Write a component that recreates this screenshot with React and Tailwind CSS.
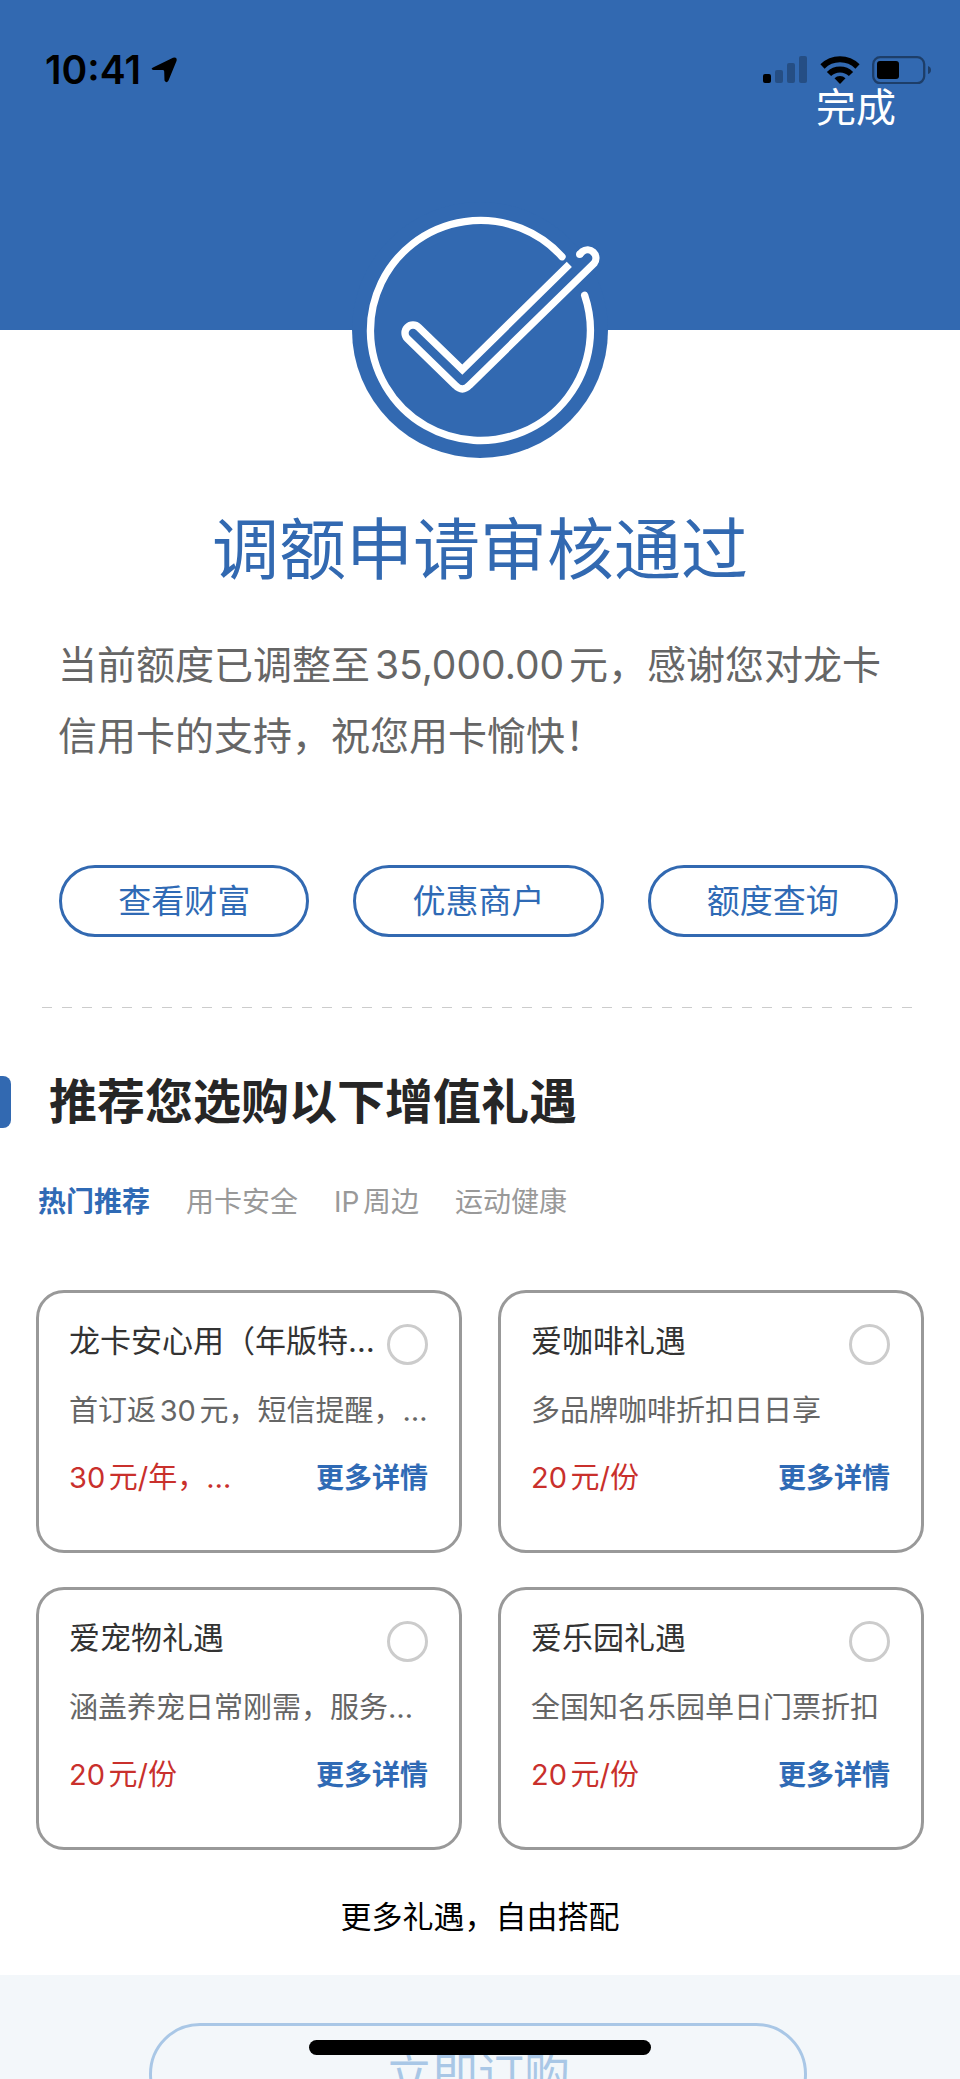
import React, { useState } from "react";

const tabs = ["热门推荐", "用卡安全", "IP周边", "运动健康"];

const actions = ["查看财富", "优惠商户", "额度查询"];

const gifts = [
  {
    id: 1,
    name: "龙卡安心用（年版特…",
    desc: "首订返30元，短信提醒，…",
    price: "30元/年，…",
  },
  { id: 2, name: "爱咖啡礼遇", desc: "多品牌咖啡折扣日日享", price: "20元/份" },
  { id: 3, name: "爱宠物礼遇", desc: "涵盖养宠日常刚需，服务…", price: "20元/份" },
  { id: 4, name: "爱乐园礼遇", desc: "全国知名乐园单日门票折扣", price: "20元/份" },
];

function StatusBar() {
  return (
    <div className="flex items-center justify-between pl-[45px] pr-7 pt-[46px] text-black">
      <div className="flex items-center gap-[10px]">
        <span className="text-[39px] leading-12 font-semibold">10:41</span>
        <svg className="w-[26px] h-[26px]" viewBox="0 0 26 26">
          <path
            d="M2 10.500 22 0.800Q26.500 -0.500 25.500 4L17.500 23.500Q15.500 27 13.500 23.500L13.200 14.500Q13.200 13 12 13L2.500 13Q-1 12 2 10.500Z"
            fill="currentColor"
          />
        </svg>
      </div>
      <div className="flex items-center gap-3">
        <svg className="w-[45px] h-7" viewBox="0 0 45 28">
          <rect x="0" y="18" width="8" height="9" rx="2" />
          <g opacity="0.25">
            <rect x="12" y="14" width="8" height="13" rx="2" />
            <rect x="24" y="7" width="8" height="20" rx="2" />
            <rect x="36" y="0" width="8" height="27" rx="2" />
          </g>
        </svg>
        <svg className="w-10 h-7" viewBox="0 0 40 28">
          <g fill="none" stroke="currentColor" strokeWidth="6">
            <path d="M2.500 10.500A25 25 0 0 1 37.500 10.500" />
            <path d="M9 18A15.500 15.500 0 0 1 31 18" />
          </g>
          <path d="M20 28 14.500 22.300A8 8 0 0 1 25.500 22.300Z" />
        </svg>
        <svg className="w-[60px] h-7" viewBox="0 0 60 28">
          <g opacity="0.4">
            <rect
              x="1.200"
              y="1.200"
              width="51"
              height="26"
              rx="7"
              fill="none"
              stroke="currentColor"
              strokeWidth="2.300"
            />
            <path d="M56 10Q59 11 59 14T56 18Z" />
          </g>
          <rect x="5" y="5" width="22" height="18" rx="3" />
        </svg>
      </div>
    </div>
  );
}

function SuccessIcon() {
  return (
    <svg className="relative w-64 h-64 -mt-32 mx-auto" viewBox="66 6 768 768">
      <circle cx="450" cy="390" r="384" fill="#3269b1" />
      <g fill="none" stroke="#fff" strokeWidth="22">
        <path
          d="M764 286A330 330 0 1 1 696 170"
          strokeLinecap="round"
        />
        <path d="M749 163 757 155A25 25 0 0 1 793 189L418 556Q397 578 376 556L232 416A24 24 0 0 1 266 382L397 509 718 193" />
      </g>
      <circle cx="749" cy="163" r="11" fill="#fff" />
    </svg>
  );
}

function GiftCard({ gift, checked, onToggle }) {
  const inputId = `gift-${gift.id}`;
  return (
    <div className="min-w-0 border-3 border-[#999] rounded-[28px] pl-[30px] pr-[31px] pt-[27px] pb-[52px]">
      <div className="flex items-start justify-between">
        <label
          htmlFor={inputId}
          className="whitespace-nowrap text-[31px] leading-[42px] text-[#333]"
        >
          {gift.name}
        </label>
        <input
          id={inputId}
          type="checkbox"
          checked={checked}
          onChange={onToggle}
          className="appearance-none shrink-0 mt-1 w-[41px] h-[41px] rounded-full border-3 border-[#ccc] checked:bg-[#3269b1]"
        />
      </div>
      <p className="mt-[26px] whitespace-nowrap text-[29px] leading-10 text-[#666]">
        {gift.desc}
      </p>
      <div className="mt-[27px] flex justify-between leading-10">
        <span className="text-[29px] text-[#c9302c]">{gift.price}</span>
        <a href="#" className="text-[28px] font-bold text-[#2f6ab5]">
          更多详情
        </a>
      </div>
    </div>
  );
}

export default function App() {
  const [activeTab, setActiveTab] = useState(tabs[0]);
  const [selected, setSelected] = useState([]);

  const toggle = (id) => {
    setSelected((prev) =>
      prev.includes(id) ? prev.filter((x) => x !== id) : [...prev, id]
    );
  };

  return (
    <div className="h-screen overflow-hidden flex flex-col bg-white font-[Inter,'Noto_Sans_CJK_SC',sans-serif] [text-autospace:normal]">
      {/* 顶部 */}
      <header className="shrink-0 h-[330px] bg-[#3269b1]">
        <StatusBar />
        <div className="flex justify-end pr-16 -mt-2">
          <button className="text-[40px] leading-11 text-white">完成</button>
        </div>
      </header>

      <main className="shrink-0">
        <SuccessIcon />
        <h1 className="mt-[52px] text-center text-[67px] leading-20 text-[#3269b1]">
          调额申请审核通过
        </h1>
        <p className="mt-[39px] pl-[58px] pr-[60px] text-[39px] leading-[71px] text-[#666]">
          当前额度已调整至35,000.00元，感谢您对龙卡信用卡的支持，祝您用卡愉快！
        </p>

        <div className="mt-[94px] pl-[59px] pr-[62px] grid grid-cols-3 gap-11">
          {actions.map((a) => (
            <button
              key={a}
              className="h-[72px] rounded-full border-3 border-[#3269b1] text-[33px] leading-10 text-[#2f6ab5]"
            >
              {a}
            </button>
          ))}
        </div>

        <div className="mt-[70px] mx-[42px] h-px bg-[repeating-linear-gradient(90deg,#ccc_0_10px,transparent_10px_20px)]" />

        {/* 推荐 */}
        <div className="mt-[68px] flex items-center">
          <span className="w-[11px] h-[52px] rounded-r-lg bg-[#3269b1]" />
          <h2 className="ml-[38px] text-[48px] leading-[52px] font-bold text-[#262626]">
            推荐您选购以下增值礼遇
          </h2>
        </div>

        <nav className="mt-[54px] pl-[38px] flex gap-9 text-[28px] leading-10">
          {tabs.map((t) => (
            <button
              key={t}
              onClick={() => setActiveTab(t)}
              className={t === activeTab ? "font-bold text-[#2f6ab5]" : "text-[#999]"}
            >
              {t}
            </button>
          ))}
        </nav>

        <div className="mt-[68px] px-9 grid grid-cols-2 gap-x-9 gap-y-[34px]">
          {gifts.map((g) => (
            <GiftCard
              key={g.id}
              gift={g}
              checked={selected.includes(g.id)}
              onToggle={() => toggle(g.id)}
            />
          ))}
        </div>

        <p className="mt-11 mb-[35px] text-center text-[31px] leading-[46px] text-black">
          更多礼遇，自由搭配
        </p>
      </main>

      {/* 底部按钮 */}
      <footer className="shrink-0 bg-[#f3f7fa] pt-12 pb-12 pl-[149px] pr-[153px]">
        <button className="w-full h-[102px] rounded-full border-3 border-[#a9c7e6] text-[46px] text-[#a9c7e6]">
          立即订购
        </button>
      </footer>
      <div className="fixed bottom-6 left-1/2 -translate-x-1/2 w-[342px] h-[15px] rounded-full bg-black" />
    </div>
  );
}
